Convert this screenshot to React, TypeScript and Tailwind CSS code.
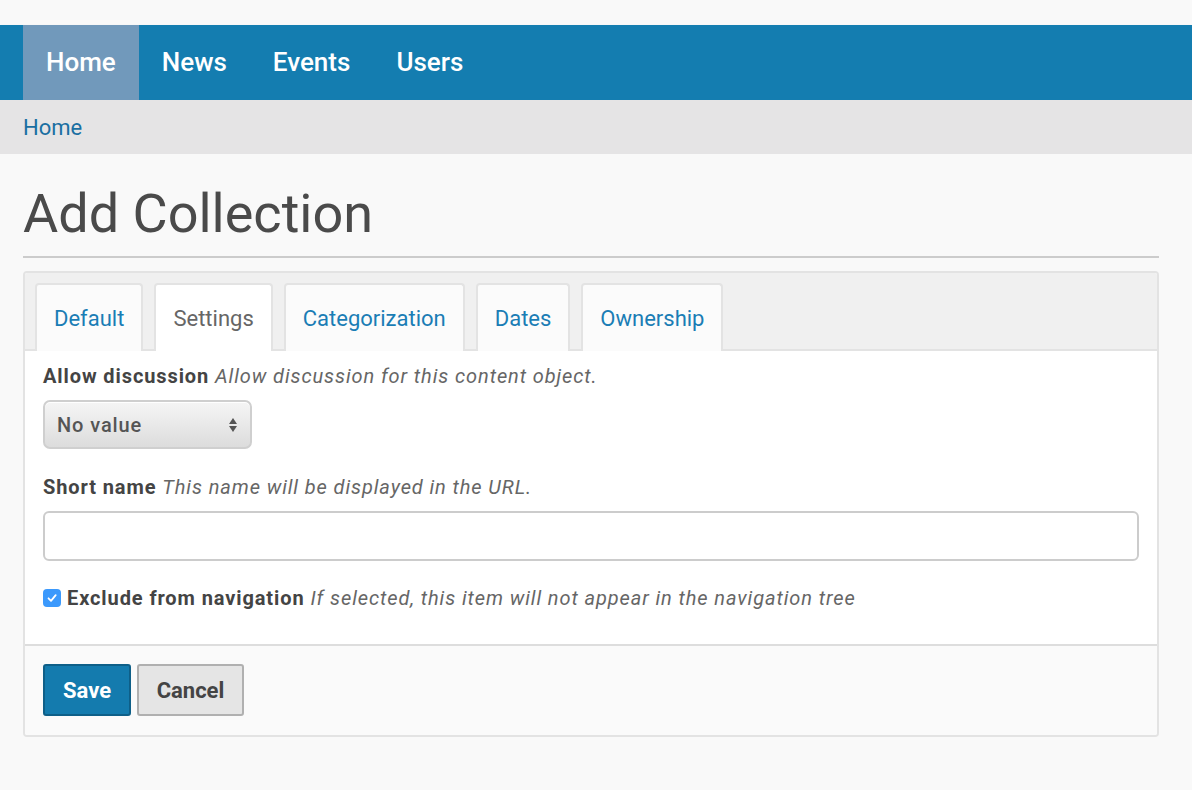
import React from "react";

const tabs = ["Default", "Settings", "Categorization", "Dates", "Ownership"];

export default function App() {
  return (
    <div className="min-h-[790px] w-full bg-[#f9f9f9] font-['Roboto',sans-serif] text-[#4a4a4a]">
      <div className="h-[25px]" />
      <nav className="flex h-[75px] bg-[#147db0] pl-[23px] shadow-[0_1px_2px_rgba(0,0,0,0.15)]">
        {["Home", "News", "Events", "Users"].map((item, i) => (
          <a
            key={item}
            className={`flex items-center px-[23px] text-[26px] font-medium text-white ${i === 0 ? "bg-[#7199bb]" : ""}`}
          >
            {item}
          </a>
        ))}
      </nav>
      <div className="flex h-[54px] items-center bg-[#e5e4e5] px-[23px] text-[22px] text-[#1a6fa2]">Home</div>

      <main className="px-[23px] pr-[33px]">
        <h1 className="mt-[25px] pb-[7px] text-[54px] leading-[70px] text-[#4a4a4a]">Add Collection</h1>
        <div className="h-[2px] bg-[#cccccc]" />

        <div className="mt-[13px] overflow-hidden rounded-[4px] border-2 border-[#e3e3e3] bg-white">
          <div className="flex gap-[11px] border-b-2 border-[#e3e3e3] bg-[#f0f0f0] px-[10px] pt-[10px]">
            {tabs.map((t) => (
              <div
                key={t}
                className={`-mb-[2px] flex h-[68px] items-center rounded-t-[4px] border-2 border-b-0 border-[#e3e3e3] px-[17px] text-[22px] ${t === "Settings" ? "bg-white text-[#666666]" : "bg-[#fbfbfb] text-[#1a7db5]"}`}
              >
                {t}
              </div>
            ))}
          </div>

          <div className="px-[18px] pb-[33px] pt-[12px] text-[20px] leading-[26px] tracking-[0.9px]">
            <div>
              <span className="font-bold text-[#444444]">Allow discussion</span>{" "}
              <span className="italic text-[#666666]">Allow discussion for this content object.</span>
            </div>
            <div className="mt-[11px] flex h-[49px] w-[209px] items-center justify-between rounded-[7px] border-2 border-[#cfcfcf] bg-gradient-to-b from-[#f5f5f5] via-[#e9e9e9] to-[#dcdcdc] px-[12px] shadow-[inset_0_1px_0_#fff]">
              <span className="font-medium text-[#555555]">No value</span>
              <svg width="10" height="16" viewBox="0 0 10 16">
                <path d="M5 1 L9 7 H1 Z" fill="#555" />
                <path d="M5 15 L9 9 H1 Z" fill="#555" />
              </svg>
            </div>

            <div className="mt-[25px]">
              <span className="font-bold text-[#444444]">Short name</span>{" "}
              <span className="italic text-[#666666]">This name will be displayed in the URL.</span>
            </div>
            <div className="mt-[11px] h-[50px] rounded-[6px] border-2 border-[#cccccc] bg-white" />

            <div className="mt-[24px] flex items-center gap-[6px]">
              <span className="flex h-[18px] w-[18px] items-center justify-center rounded-[4px] bg-[#3b99fc]">
                <svg width="12" height="12" viewBox="0 0 12 12">
                  <path d="M2.5 6.3 L5 8.8 L9.7 3.2" stroke="#fff" strokeWidth="1.8" fill="none" strokeLinecap="round" strokeLinejoin="round" />
                </svg>
              </span>
              <span>
                <span className="font-bold text-[#444444]">Exclude from navigation</span>{" "}
                <span className="italic text-[#666666]">If selected, this item will not appear in the navigation tree</span>
              </span>
            </div>
          </div>

          <div className="flex gap-[6px] border-t-2 border-[#dddddd] bg-[#fafafa] px-[18px] pb-[19px] pt-[18px]">
            <button className="h-[52px] w-[88px] rounded-[3px] border-2 border-[#0e5f88] bg-[#147bae] text-[22px] font-bold text-white">
              Save
            </button>
            <button className="h-[52px] w-[107px] rounded-[3px] border-2 border-[#b0b0b0] bg-[#e5e5e5] text-[22px] font-bold text-[#444444]">
              Cancel
            </button>
          </div>
        </div>
      </main>
    </div>
  );
}
